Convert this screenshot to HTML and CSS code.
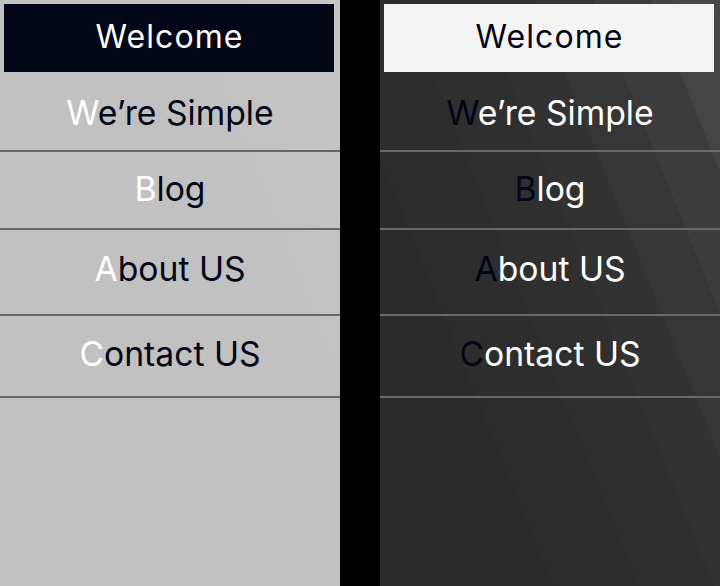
FILE: index.html
```html
<!DOCTYPE html>
<html lang="en">
<head>
<meta charset="utf-8">
<title>Menu</title>
<link rel="stylesheet" href="styles.css">
</head>
<body>
  <nav class="panel panel-light">
    <div class="welcome">Welcome</div>
    <ul class="menu">
      <li class="item"><span class="first">W</span>e’re Simple</li>
      <li class="item"><span class="first">B</span>log</li>
      <li class="item"><span class="first">A</span>bout US</li>
      <li class="item"><span class="first">C</span>ontact US</li>
    </ul>
  </nav>
  <nav class="panel panel-dark">
    <div class="welcome">Welcome</div>
    <ul class="menu">
      <li class="item"><span class="first">W</span>e’re Simple</li>
      <li class="item"><span class="first">B</span>log</li>
      <li class="item"><span class="first">A</span>bout US</li>
      <li class="item"><span class="first">C</span>ontact US</li>
    </ul>
  </nav>
</body>
</html>
```
FILE: styles.css
```css
html, body {
  margin: 0;
  padding: 0;
}
body {
  background: #000;
  width: 720px;
  height: 586px;
  display: flex;
  gap: 40px;
  font-family: Inter, "Noto Sans", sans-serif;
  overflow: hidden;
}
.panel {
  width: 340px;
  height: 586px;
  box-sizing: border-box;
  padding-top: 4px;
  display: flex;
  flex-direction: column;
}
.panel-light {
  background: linear-gradient(68deg, #c1c1c1 0%, #c1c1c1 70%, #c3c3c3 85%, #c6c6c6 100%);
  color: #020617;
}
.panel-dark {
  background: linear-gradient(68deg,
    #2b2b2b 0%, #2b2b2b 30%,
    #2d2d2d 30%, #2d2d2d 45%,
    #2f2f2f 45%, #2f2f2f 58%,
    #323232 58%, #323232 68%,
    #363636 68%, #363636 78%,
    #3c3c3c 78%, #3c3c3c 88%,
    #444 88%, #484848 100%);
  color: #fff;
}
.welcome {
  margin: 0 6px 0 4px;
  height: 68px;
  line-height: 66px;
  text-align: center;
  font-size: 32px;
  letter-spacing: 1.1px;
  text-indent: 1.1px;
}
.panel-light .welcome {
  background: #020617;
  color: #fff;
}
.panel-dark .welcome {
  background: #f4f4f4;
  color: #020617;
}
.menu {
  list-style: none;
  margin: 0;
  padding: 0;
}
.item {
  text-align: center;
  font-size: 33.7px;
  line-height: 34px;
  border-bottom: 2px solid #646464;
}
.panel-dark .item {
  border-bottom-color: #6a6a6a;
}
.item:nth-child(1) { padding: 24px 0 20px; }
.item:nth-child(2) { padding: 20px 0 22px; }
.item:nth-child(3) { padding: 22px 0 28px; }
.item:nth-child(4) { padding: 21px 0 25px; }
.panel-light .first { color: #fff; }
.panel-dark .first { color: #020617; }
```
